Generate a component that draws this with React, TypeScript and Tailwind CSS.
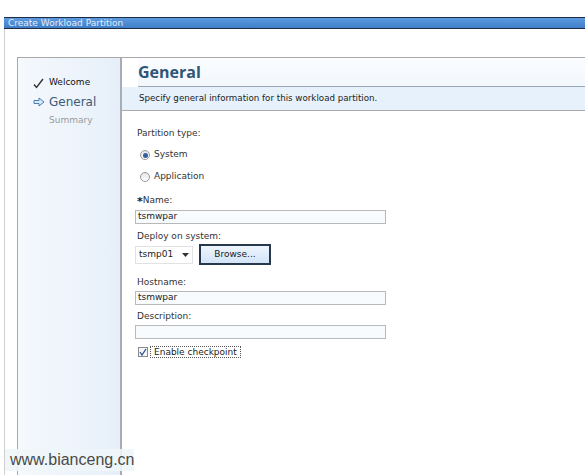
import React from "react";

const font = { fontFamily: '"DejaVu Sans", Verdana, sans-serif' };

function Radio({ checked }: { checked?: boolean }) {
  return (
    <span className="relative inline-flex h-[10px] w-[10px] items-center justify-center rounded-full border border-[#9a9a9a] bg-gradient-to-b from-[#e4e4e4] to-[#ffffff]">
      {checked && <span className="h-[5px] w-[5px] rounded-full bg-[#2f5f9e]" />}
    </span>
  );
}

function Field({ value }: { value?: string }) {
  return (
    <div className="ml-[-2px] flex h-[14px] w-[251px] items-center border border-[#b9b9b9] bg-[#f7fbfd] pl-[2px] text-[9px] text-[#222]">
      {value}
    </div>
  );
}

export default function App() {
  return (
    <div style={font} className="relative h-[475px] w-[585px] overflow-hidden bg-white">
      <div className="h-[17px]" />
      {/* title bar */}
      <div className="ml-[4px] flex h-[12px] items-center border-y border-[#1e2c44] bg-gradient-to-b from-[#5d9ae0] to-[#3f7fc8] pl-[4px] text-[9px] leading-none text-[#e4eefa]">
        Create Workload Partition
      </div>

      <div className="ml-[4px] h-[446px] border-l border-[#cfcfcf] pl-[12px] pt-[28px]">
        <div className="flex h-full border-l border-t border-[#a9a9a9]">
          {/* sidebar */}
          <div className="flex w-[104px] flex-col border-r-2 border-[#a7adb3] bg-gradient-to-r from-[#f6f9fd] to-[#e6eff9] pl-[15px] pt-[17px]">
            <div className="flex h-[16px] items-center gap-[5px] text-[9px] text-[#111]">
              <svg width="11" height="11" viewBox="0 0 11 11">
                <path d="M1 6.5 L3.5 9.5 L10 1" fill="none" stroke="#333" strokeWidth="1.4" />
              </svg>
              Welcome
            </div>
            <div className="mt-[3px] flex h-[16px] items-center gap-[4px] text-[12px] text-[#3a5a78]">
              <svg width="12" height="10" viewBox="0 0 12 10">
                <path d="M1 3.5 H6 V1 L11 5 L6 9 V6.5 H1 Z" fill="#d8ecfb" stroke="#4a7fb3" strokeWidth="1" />
              </svg>
              General
            </div>
            <div className="mt-[4px] pl-[16px] text-[9px] text-[#9a9a9a]">Summary</div>
          </div>

          {/* main */}
          <div className="flex flex-1 flex-col">
            <div className="border-b border-[#a9a9a9]">
              <div
                style={{ fontFamily: '"Open Sans", "DejaVu Sans", sans-serif' }}
                className="ml-[16px] flex h-[29px] items-center border-b border-[#9aa7b4] bg-gradient-to-b from-[#fbfdff] to-[#f2f7fc] text-[16px] font-bold text-[#2f5676]"
              >
                General
              </div>
              <div className="flex h-[23px] items-center bg-[#e6f1fb] pl-[17px] text-[8.7px] text-[#222]">
                Specify general information for this workload partition.
              </div>
            </div>

            <div className="flex flex-col pl-[15px] pt-[16px] text-[9px] text-[#333]">
              <div className="h-[12px]">Partition type:</div>
              <div className="mt-[10px] flex h-[12px] items-center gap-[4px] pl-[3px]">
                <Radio checked />
                <span>System</span>
              </div>
              <div className="mt-[10px] flex h-[12px] items-center gap-[4px] pl-[3px]">
                <Radio />
                <span>Application</span>
              </div>
              <div className="mt-[12px] flex h-[12px] items-center">
                <span className="text-[11px] font-bold leading-none text-[#222]">*</span>
                <span>Name:</span>
              </div>
              <div className="mt-[3px]">
                <Field value="tsmwpar" />
              </div>
              <div className="mt-[6px] h-[12px]">Deploy on system:</div>
              <div className="mt-[2px] flex items-center gap-[6px]">
                <div className="ml-[-2px] flex h-[18px] w-[58px] items-center justify-between border border-[#e2e2e2] bg-white px-[3px] text-[9px] text-[#222]">
                  <span>tsmp01</span>
                  <svg width="7" height="4" viewBox="0 0 7 4">
                    <path d="M0 0 H7 L3.5 4 Z" fill="#333" />
                  </svg>
                </div>
                <div className="flex h-[21px] w-[72px] items-center justify-center border-2 border-[#27384c] bg-gradient-to-b from-[#eef5fd] to-[#d2e4f7] text-[9px] text-[#222]">
                  Browse...
                </div>
              </div>
              <div className="mt-[11px] h-[12px]">Hostname:</div>
              <div className="mt-[3px]">
                <Field value="tsmwpar" />
              </div>
              <div className="mt-[5px] h-[12px]">Description:</div>
              <div className="mt-[3px]">
                <Field />
              </div>
              <div className="mt-[7px] flex h-[12px] items-center gap-[2px] pl-[1px]">
                <span className="flex h-[10px] w-[10px] items-center justify-center border border-[#8a8a8a] bg-[#f3f7fb]">
                  <svg width="8" height="8" viewBox="0 0 8 8">
                    <path d="M1 4 L3 7 L7 1" fill="none" stroke="#2f4f8a" strokeWidth="1.3" />
                  </svg>
                </span>
                <span className="border border-dotted border-[#555] px-[3px] leading-[10px] text-[#222]">
                  Enable checkpoint
                </span>
              </div>
            </div>
          </div>
        </div>
      </div>

      {/* watermark */}
      <div
        style={{ fontFamily: '"Liberation Sans", Arial, sans-serif' }}
        className="absolute left-[5px] top-[449px] flex h-[22px] w-[129px] items-center bg-[#eef6f8]/90 pl-[5px] text-[16px] text-[#4a4a4a]"
      >
        www.bianceng.cn
      </div>
    </div>
  );
}
